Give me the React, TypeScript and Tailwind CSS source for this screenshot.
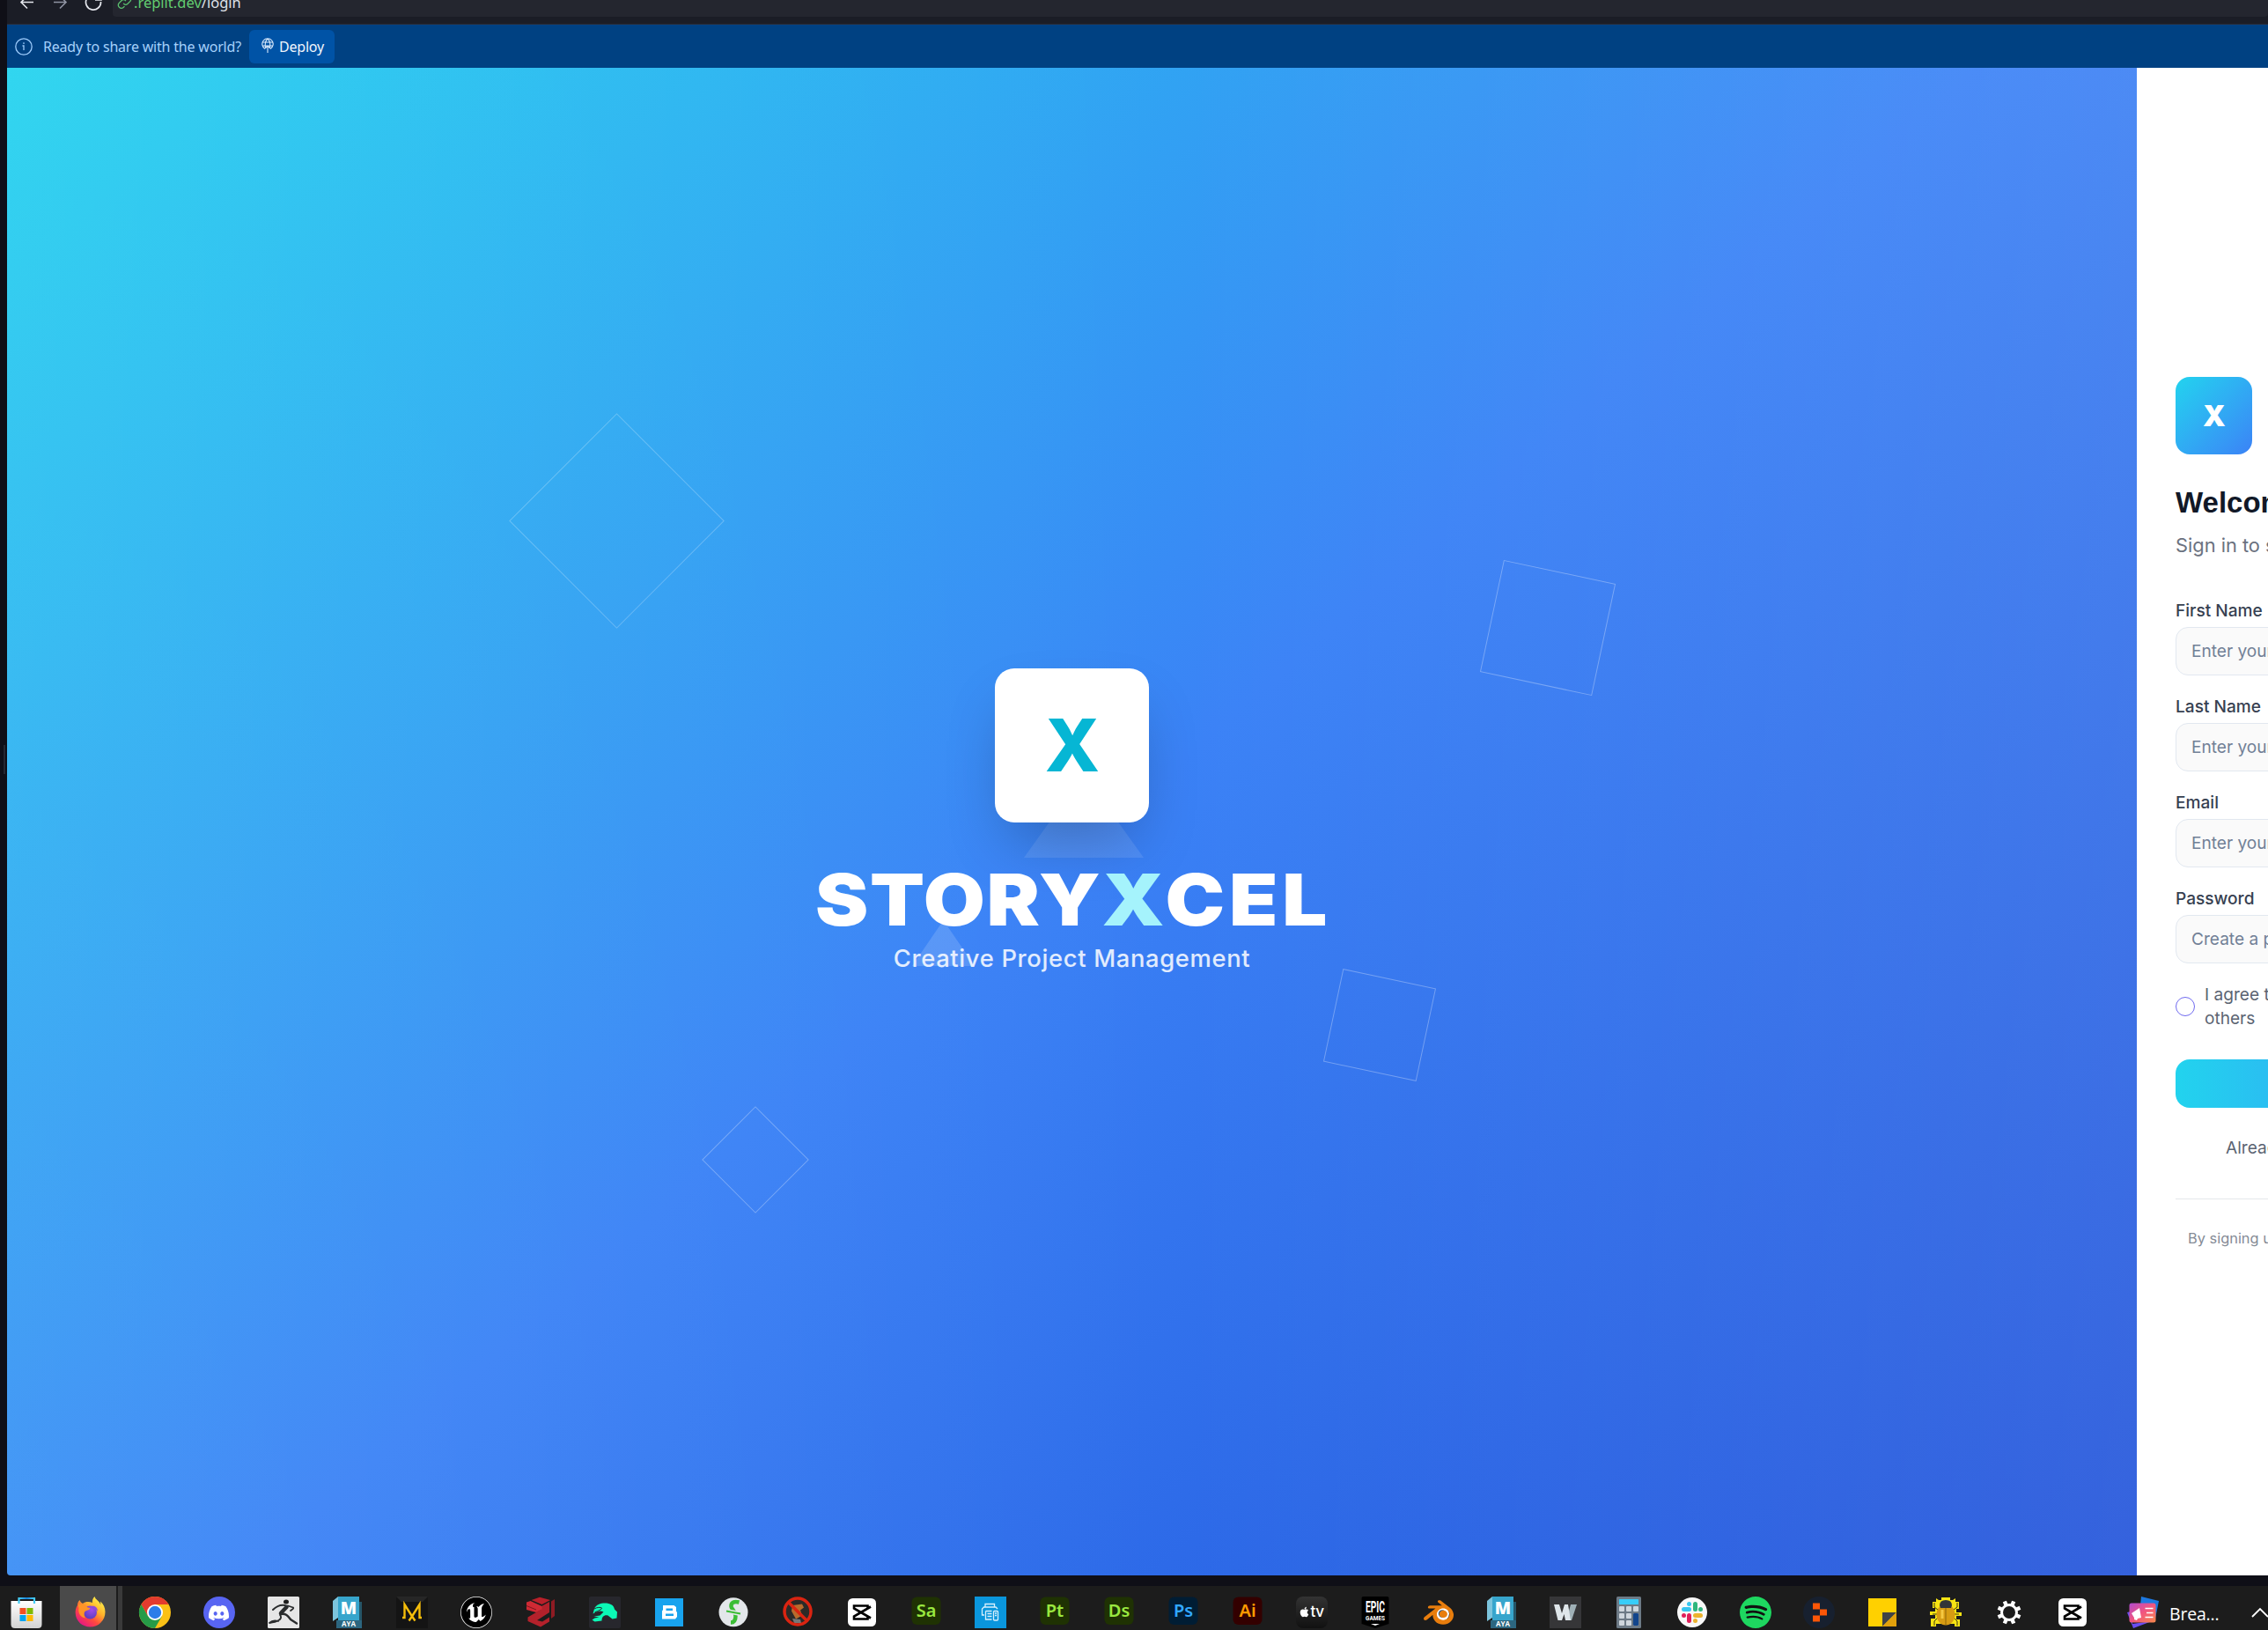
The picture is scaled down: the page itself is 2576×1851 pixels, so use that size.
import React from "react";
import { SiUnrealengine, SiDiscord, SiSpotify, SiBlender } from "react-icons/si";
import { FaApple } from "react-icons/fa";

const inter = "font-['Inter',sans-serif]";
const plex = "font-['Noto_Sans',sans-serif]";

function Svg({ children, size = 36 }: { children: React.ReactNode; size?: number }) {
  return (
    <svg width={size} height={size} viewBox="0 0 36 36" className="block shrink-0 overflow-visible">
      {children}
    </svg>
  );
}

function Store() {
  return (
    <Svg>
      <defs>
        <linearGradient id="st" x1="0" y1="0" x2="0" y2="1"><stop offset="0" stopColor="#fff" /><stop offset="1" stopColor="#d2d2d2" /></linearGradient>
        <linearGradient id="sth" x1="0" y1="0" x2="1" y2="0"><stop offset="0" stopColor="#45cdf5" /><stop offset="0.5" stopColor="#1a83d8" /><stop offset="1" stopColor="#45cdf5" /></linearGradient>
      </defs>
      <path d="M.5 5h35v26.500q0 4.500-4.500 4.500h-26q-4.500 0-4.500-4.500z" fill="url(#st)" />
      <path d="M9.500 8V2h17.500v6" fill="none" stroke="url(#sth)" strokeWidth="2.200" />
      <path d="M10.500 13h7v7h-7z" fill="#f25022" /><path d="M18.500 13h7v7h-7z" fill="#7fba00" />
      <path d="M10.500 21h7v7h-7z" fill="#00a4ef" /><path d="M18.500 21h7v7h-7z" fill="#ffb900" />
    </Svg>
  );
}

function Firefox() {
  return (
    <Svg>
      <defs>
        <linearGradient id="ff" x1="0.85" y1="0.1" x2="0.2" y2="0.95"><stop offset="0" stopColor="#fff04a" /><stop offset="0.35" stopColor="#ffb02a" /><stop offset="0.65" stopColor="#ff4a3d" /><stop offset="1" stopColor="#e31587" /></linearGradient>
        <radialGradient id="ffp" cx="0.6" cy="0.3" r="0.7"><stop offset="0" stopColor="#a44bea" /><stop offset="1" stopColor="#5a40bd" /></radialGradient>
      </defs>
      <path d="M22.500 0c-2 2-3 4.500-2.500 7-4-1.500-8-1.500-11 1C7.500 7 6 6 5.500 4 3.500 6 3 8 3 10c-2 3-2.500 6-2.300 9C1.200 28 8.500 34.500 17.500 34.500c9.500 0 17-7.500 17-17 0-5-2-9-5.500-12l.4 4C27.500 4 23.500 4 22.500 0z" fill="url(#ff)" />
      <circle cx="17.500" cy="18" r="7.500" fill="url(#ffp)" />
      <path d="M3.500 9.500c4-2 8-1 9.500 2 1 1 3 1 4.500 1.500-1 3-4.500 2.500-6 4-1.500 2-1 6 1 7.500C6 24 3.500 18 4.500 13z" fill="#ff9427" />
      <path d="M19 11c4-1 7 2 7 6-1-2-3-2.500-5-2.500z" fill="#8e4adb" />
    </Svg>
  );
}

function Chrome() {
  return (
    <Svg>
      <circle cx="18" cy="18" r="18" fill="#fbc116" />
      <path d="M18 9h15.600A18 18 0 0 0 2.410 9L10.200 22.500z" fill="#e33b2e" />
      <path d="M2.410 9A18 18 0 0 0 18 36l7.800-13.500H10.200z" fill="#269b47" />
      <circle cx="18" cy="18" r="9" fill="#fff" /><circle cx="18" cy="18" r="7.200" fill="#2b7de9" />
    </Svg>
  );
}

function Discord() {
  return (
    <div className="flex size-9 items-center justify-center rounded-full bg-[#5865f2]">
      <SiDiscord size={23} color="#fff" />
    </div>
  );
}

function ZBrush() {
  return (
    <Svg>
      <rect width="36" height="36" rx="1.500" fill="#e6e6e6" />
      <ellipse cx="21" cy="6" rx="3" ry="2.500" fill="#1d1d1d" />
      <g fill="none" stroke="#2a2c2d" strokeLinecap="round" strokeLinejoin="round">
        <path d="M21.500 12c-2 2-4 4-6.500 7" strokeWidth="4.500" /><path d="M23 10.500l6 2c1 1-1 2-3 3.500" strokeWidth="1.800" />
        <path d="M20 10c-5-1-9 0-14 5" strokeWidth="2" /><path d="M15 20c6-1 8 2 11 6l7 4.500" strokeWidth="2.400" />
        <path d="M14 21c4 5-4 8-12 9 3-3 7-3 10-2" strokeWidth="1.800" />
      </g>
    </Svg>
  );
}

function Maya() {
  return (
    <Svg>
      <path d="M30 6h4v30H30z" fill="#255668" />
      <path d="M1 5 7 0v24l-6 4z" fill="#7cc4dc" />
      <path d="M7 0h24v27H7z" fill="#37a5cc" />
      <path d="M5 27h29v9H5z" fill="#2c6680" />
      <text x="19" y="20" textAnchor="middle" className="font-['Open_Sans',sans-serif] text-[19px] font-extrabold" fill="#fff">M</text>
      <text x="19" y="33.500" textAnchor="middle" className="font-['Open_Sans',sans-serif] text-[8px] font-bold" fill="#fff">AYA</text>
    </Svg>
  );
}

function Marvelous() {
  return (
    <Svg>
      <path d="M0 0h36v36H0z" fill="#141414" /><path d="M0 0h36l-6 6H6z" fill="#262626" />
      <path d="M7 24h2.500V9L18 22.500l3.500 5M29 24h-2.500V9L18 22.500l-3.500 5" fill="none" stroke="#f5bd0a" strokeWidth="2.400" />
    </Svg>
  );
}

function Unreal() {
  return (
    <div className="flex size-9 items-center justify-center rounded-full bg-black">
      <SiUnrealengine size={36} color="#fff" />
    </div>
  );
}

function Zee() {
  return (
    <Svg>
      <path d="M7.500 4 17 .8 29 4l-9.500 5z" fill="#b9202a" />
      <path d="M19 11 28 6v12L14 27l6 1.500 8-5v5L18 34.500 3.500 28v-4.500L19 14.500z" fill="#b3212b" />
      <path d="M2 6.500 6.500 5l13 6v3.500L13 18 2 15z" fill="#cf2a34" />
      <path d="M2 10.500 13 15" stroke="#7d161e" strokeWidth="1" />
      <path d="M30 5.500 34 3v19l-4 3z" fill="#8e1b23" />
    </Svg>
  );
}

function Character() {
  return (
    <Svg>
      <rect width="36" height="36" rx="2" fill="#27272d" />
      <path d="M6 14C8 9 13 7.500 18 7.500c6 0 10 2 11 7l3 3-.5 7-5 1-5-4c-4-1-7 1-7 6l-8 1-3-2 3-2 5-1-6-1 7-1 4-4c-3-2-7-1-12 2z" fill="#0bf9b6" />
      <path d="M6 14c3-2 7-2 8.500-1 0 2-4 3-8 5" fill="none" stroke="#27272d" />
    </Svg>
  );
}

function Bridge() {
  return (
    <Svg>
      <path d="M2 2h32v32H2z" fill="#18a3ee" />
      <path fillRule="evenodd" d="M11 10h12.500l2.500 2v4.500l1 1.500v5l-2 2.500H10v-9.500l1-.5zM14.500 13.500v2.500h7.500v-2.500zM14 19.500V22h9v-2.500z" fill="#fff" />
    </Svg>
  );
}

function Fab() {
  return (
    <Svg>
      <circle cx="18" cy="17.800" r="16.500" fill="#e3e7ea" />
      <path d="M24.500 6.500c-6-1.500-9.500.5-9 5 .3 3 5 5 5 10.500s-2 7.500-5.500 7.500" fill="none" stroke="#3bbd35" strokeWidth="4.500" />
      <path d="M10 16.500 26 19.500" stroke="#e3e7ea" strokeWidth="5" /><path d="M10 16.500 26 19.500" stroke="#3bbd35" strokeWidth="1.800" />
    </Svg>
  );
}

function Blocked() {
  return (
    <Svg>
      <circle cx="18" cy="17" r="15" fill="#2c2a27" />
      <path d="M12 10l11-1.500 2 4-4 3 2 6-7 4-5-9z" fill="#b96b2c" /><path d="M12 25l9 1 1 4h-8z" fill="#777" />
      <circle cx="18" cy="17" r="15" fill="none" stroke="#da2411" strokeWidth="3.500" /><path d="M7.500 6.500l21 21" stroke="#da2411" strokeWidth="3.500" />
    </Svg>
  );
}

function CapCut() {
  return (
    <Svg>
      <rect x="2" y="2" width="32" height="32" rx="5.500" fill="#fff" />
      <path d="M28 11.500 9 22.500v3h15.500v-3M28 24.500 9 13.500v-3h15.500v3" fill="none" stroke="#000" strokeWidth="2.600" />
    </Svg>
  );
}

function Adobe({ label, bg, fg }: { label: string; bg: string; fg: string }) {
  return (
    <Svg>
      <rect x="1.500" y="0.500" width="33" height="31.500" rx="6" fill={bg} />
      <text x="18" y="23" textAnchor="middle" className="font-['Noto_Sans',sans-serif] text-[20px] font-semibold" fill={fg}>{label}</text>
    </Svg>
  );
}

function Printer() {
  return (
    <Svg>
      <path d="M0 0h36v36H0z" fill="#0a96dc" />
      <g fill="none" stroke="#d8f0fc" strokeWidth="1.300">
        <path d="M12 12V8.500h10.500V12M11 21H8.500v-7l2-2h13.500l2 2M12.500 16.500v9.500h7M12.500 16.500h7M14.500 19.500h5M14.500 22.500h5" />
        <rect x="21.500" y="16.500" width="5" height="10.500" rx="1" /><path d="M23 19h2M23 21.500h2" />
      </g>
    </Svg>
  );
}

function AppleTv() {
  return (
    <div className="flex size-9 items-center justify-center rounded-lg bg-linear-to-b from-[#333] to-[#111] pb-0.5 text-white">
      <FaApple size={13} />
      <span className="font-['Inter',sans-serif] text-[17px] leading-none font-medium tracking-tight">tv</span>
    </div>
  );
}

function Epic() {
  return (
    <Svg>
      <path d="M2.500 2q0-2 2-2h27q2 0 2 2v29L18 36 2.500 31z" fill="#000" />
      <text x="7" y="18" textLength="22" lengthAdjust="spacingAndGlyphs" className="font-['Roboto',sans-serif] text-[19px] font-bold" fill="#fff">EPIC</text>
      <text x="7" y="26.500" textLength="22" lengthAdjust="spacingAndGlyphs" className="font-['Roboto',sans-serif] text-[6.500px] font-bold" fill="#fff">GAMES</text>
      <path d="M13 31h10l-5 2z" fill="#fff" />
    </Svg>
  );
}

function Blender() {
  return (
    <div className="relative flex size-9 items-center justify-center">
      <svg viewBox="0 0 36 36" className="absolute inset-0"><circle cx="22" cy="19.500" r="8" fill="#fff" /><circle cx="22" cy="19.500" r="4.200" fill="#265787" /></svg>
      <SiBlender size={34} color="#e87d0d" className="relative" />
    </div>
  );
}

function Word() {
  return (
    <Svg>
      <path d="M0 0h36v36H0z" fill="#363638" />
      <path d="M24 9h7l-6 18h-6z" fill="#9fb0b6" /><path d="M5 9h6l3 10 3-10h4l3 18h-6l-1.500-7L14 27H9.500z" fill="#dfe6ea" />
    </Svg>
  );
}

function Calculator() {
  return (
    <Svg>
      <rect x="4" y="0" width="28" height="36" rx="1.500" fill="#6d7a86" />
      <rect x="7" y="3" width="22" height="6" rx="0.500" fill="#38cdf8" />
      {[11, 19, 27].map((y) => [7, 15, 23].map((x) => <rect key={`${x}-${y}`} x={x} y={y} width="6" height="6" rx="1" fill="#cfd6dd" />))}
      <rect x="23" y="19" width="6" height="14" rx="1" fill="#12458c" />
    </Svg>
  );
}

function Slack() {
  return (
    <Svg>
      <circle cx="18" cy="18" r="17" fill="#f8f8f8" />
      <g strokeWidth="5" strokeLinecap="round">
        <path d="M8.500 14.500h6" stroke="#36c5f0" /><path d="M21.500 8.500v6" stroke="#2eb67d" />
        <path d="M21.500 21.500h6" stroke="#ecb22e" /><path d="M14.500 21.500v6" stroke="#e01e5a" />
      </g>
      <circle cx="14.500" cy="8.500" r="2.500" fill="#36c5f0" /><circle cx="27.500" cy="14.500" r="2.500" fill="#2eb67d" />
      <circle cx="21.500" cy="27.500" r="2.500" fill="#ecb22e" /><circle cx="8.500" cy="21.500" r="2.500" fill="#e01e5a" />
    </Svg>
  );
}

function Spotify() {
  return (
    <div className="flex size-9 items-center justify-center rounded-full bg-[#111]">
      <SiSpotify size={36} color="#1ed760" />
    </div>
  );
}

function Replit() {
  return (
    <Svg>
      <circle cx="18" cy="18" r="18" fill="#17202f" />
      <path d="M11 7.500h8v7h-8zM19 14.500h8v7h-8zM11 21.500h8v7h-8z" fill="#fb5607" />
    </Svg>
  );
}

function Sticky() {
  return (
    <Svg>
      <path d="M2 2h32v32H2z" fill="#ffd000" /><path d="M18 18h16L18 34z" fill="#404246" /><path d="M34 18v16H18z" fill="#e2a10c" />
    </Svg>
  );
}

function Bug() {
  return (
    <Svg>
      <path d="M13 1h10v3h3l3-2v4h4v8h-3v4h6v4h-6v4h4v8h-6v-3H7v3H1v-9h5v-4H0v-4h6v-4H3V6h4V2l3 2h3z" fill="#f7e413" />
      <path d="M5 7v5l4 3M31 7v5l-4 3M3 20h6M33 20h-6M5 33v-5l4-4M31 33v-5l-4-4" fill="none" stroke="#3c3812" />
      <ellipse cx="18" cy="20.500" rx="10.500" ry="12" fill="#d79c13" /><path d="M11 10q0-6 7-6t7 6l-1 3H12z" fill="#333438" />
      <path d="M18 13v19" stroke="#8f670a" /><path d="M14 15v10" stroke="#f5c842" strokeWidth="3" />
    </Svg>
  );
}

function Gear() {
  return (
    <Svg>
      <circle cx="18" cy="18" r="8.500" fill="none" stroke="#fff" strokeWidth="3" />
      {[22.5, 67.5, 112.5, 157.5, 202.5, 247.5, 292.5, 337.5].map((a) => (
        <path key={a} d="M15.800 4.500h4.400v5h-4.400z" fill="#fff" transform={`rotate(${a} 18 18)`} />
      ))}
    </Svg>
  );
}

function News() {
  return (
    <Svg>
      <defs><linearGradient id="nw" x1="0" y1="0" x2="1" y2="1"><stop offset="0" stopColor="#b04ad0" /><stop offset="0.5" stopColor="#f2557f" /><stop offset="1" stopColor="#f6894a" /></linearGradient></defs>
      <path d="M16 0l20 5-4 20-18-5z" fill="#1d78e0" /><path d="M0 18l4-1 2 14 22-3-21 8z" fill="#6a4df0" />
      <rect x="2.500" y="7.500" width="30" height="22" rx="2.500" fill="url(#nw)" />
      <path d="M5 19l9-6 2 11-4 1-1 2-3-1v-2z" fill="#fff" /><path d="M20.500 13.500h9M22 18.500h7.500M20.500 23.500h9" stroke="#fff" strokeWidth="1.600" />
    </Svg>
  );
}

const firstApps: React.ReactNode[] = [
  <Chrome />, <Discord />, <ZBrush />, <Maya />, <Marvelous />, <Unreal />, <Zee />, <Character />, <Bridge />, <Fab />, <Blocked />, <CapCut />,
  <Adobe label="Sa" bg="#1f3203" fg="#99e83f" />, <Printer />, <Adobe label="Pt" bg="#1f3203" fg="#99e83f" />, <Adobe label="Ds" bg="#1f3203" fg="#99e83f" />,
  <Adobe label="Ps" bg="#001d34" fg="#31a8ff" />, <Adobe label="Ai" bg="#330000" fg="#ff9a00" />, <AppleTv />,
];
const lastApps: React.ReactNode[] = [
  <Epic />, <Blender />, <Maya />, <Word />, <Calculator />, <Slack />, <Spotify />, <Replit />, <Sticky />, <Bug />, <Gear />, <CapCut />,
];

function Taskbar() {
  return (
    <footer className="flex h-[50px] w-full shrink-0 overflow-hidden bg-[#1c1c1c]">
      <div className="flex w-[68px] shrink-0 pt-3 pl-3"><Store /></div>
      <div className="flex w-16 shrink-0 bg-[#4a4a4a] pt-3 pl-[17px]"><Firefox /></div>
      <div className="ml-0.5 w-[5px] shrink-0 bg-[#3a3a3a]" />
      <div className="flex shrink-0">
        {firstApps.map((icon, i) => (
          <div key={i} className="flex w-[73px] shrink-0 justify-center pt-3">{icon}</div>
        ))}
        {lastApps.map((icon, i) => (
          <div key={i} className="flex w-[72px] shrink-0 justify-center pt-3">{icon}</div>
        ))}
      </div>
      <div className="flex shrink-0 items-start pt-3 pl-[26px]">
        <News />
        <span className="ml-3 w-[93px] pt-1.5 font-['Open_Sans',sans-serif] text-[19.500px] leading-7 tracking-[-0.2px] text-white">Brea...</span>
        <svg width="20" height="12" viewBox="0 0 20 12" className="mt-3 shrink-0"><path d="M1 11 10 2l9 9" fill="none" stroke="#fff" strokeWidth="1.800" /></svg>
      </div>
    </footer>
  );
}

function AddressBar() {
  return (
    <div className="flex h-[27px] items-start overflow-hidden bg-[#1b1d26]">
      <svg width="18" height="20" viewBox="0 0 18 20" className="-mt-2 ml-[14px]" fill="none" stroke="#e4e6ec" strokeWidth="1.600"><path d="M16 10.500H2M9 3.500l-7 7 7 7" /></svg>
      <svg width="18" height="20" viewBox="0 0 18 20" className="-mt-2 ml-[19px]" fill="none" stroke="#8f93a2" strokeWidth="1.600"><path d="M2 10.500h14M9 3.500l7 7-7 7" /></svg>
      <svg width="24" height="24" viewBox="0 0 24 24" className="-mt-3 ml-[17px]" fill="none" stroke="#e4e6ec" strokeWidth="1.700"><path d="M18 8.500A8.500 8.500 0 1 0 20.500 14M21 5v7h-7" /></svg>
      <div className="ml-2.5 flex h-[19px] flex-1 items-start rounded-b bg-[#24262f]">
        <svg width="17" height="17" viewBox="0 0 24 24" className="-mt-1.5 ml-[5px] shrink-0" fill="none" stroke="#5cc470" strokeWidth="1.800"><path d="M10 14a5 5 0 0 0 7 .5l4-4a5 5 0 0 0-7-7l-2 2M14 10a5 5 0 0 0-7-.5l-4 4a5 5 0 0 0 7 7l2-2" /></svg>
        <p className={`${plex} -mt-2.5 ml-0.5 text-[16.500px] leading-[25px] whitespace-nowrap text-[#dfe1e8]`}><span className="text-[#62cc70]">.replit.dev</span>/login</p>
      </div>
    </div>
  );
}

function DeployBanner() {
  return (
    <div className={`${plex} flex h-[50px] items-center border-t border-[#2b2d38] bg-[#004182]`}>
      <svg width="20" height="20" viewBox="0 0 20 20" className="ml-[9px]" fill="none" stroke="#9dcbfb" strokeWidth="1.300"><circle cx="10" cy="10" r="9.200" /><path d="M8.500 9H10v5M10 5.300v1.700" /></svg>
      <span className="ml-3 w-[226px] text-[16px] leading-6 tracking-[-0.2px] whitespace-nowrap text-[#a5d0fb]">Ready to share with the world?</span>
      <div className="ml-2 flex h-[38px] w-[97px] items-center rounded-md bg-[#0053a6] pl-3.5">
        <svg width="14" height="18" viewBox="0 0 14 18" className="mb-0.5" fill="none" stroke="#d9e9fb" strokeWidth="1.100"><path d="M4 12.400A6.200 6.200 0 1 1 10 12.400M1 5h12M1 9h12M4.800 12C3.500 8 4.500 3 7 1c2.500 2 3.500 7 2.200 11M7 17V9M4.500 11.500 7 9l2.500 2.500" /></svg>
        <span className="ml-1.5 text-[16px] leading-6 tracking-[-0.2px] text-[#f0f5fc]">Deploy</span>
      </div>
    </div>
  );
}

function Hero() {
  return (
    <section className="relative flex w-[2419px] shrink-0 flex-col items-center overflow-hidden rounded-bl bg-[linear-gradient(139deg,#22d3ee,#3b82f6_51%,#1e50d9)] pt-[682px]">
      <div className="absolute inset-0 bg-linear-to-r from-white/7 via-transparent via-55% to-white/10" />
      <div className="absolute top-[428px] left-[606px] size-[173px] rotate-45 border border-white/25" />
      <div className="absolute top-[571px] left-[1685px] size-[130px] rotate-12 border border-white/30" />
      <div className="absolute top-[1033px] left-[1505px] size-[108px] rotate-12 border border-white/30" />
      <div className="absolute top-[1197px] left-[807px] size-[86px] rotate-45 border border-white/30" />
      <div className="absolute top-[802px] left-[1155px] h-[95px] w-[136px] bg-white/10 [clip-path:polygon(50%_0,100%_100%,0_100%)]" />
      <div className="absolute top-[968px] left-[1028px] h-[52px] w-[71px] bg-white/15 [clip-path:polygon(50%_0,100%_100%,0_100%)]" />
      <div className="relative flex size-[175px] items-center justify-center rounded-[22px] bg-white shadow-[0_34px_68px_-16px_rgba(0,0,0,0.25)]">
        <span className={`${inter} ml-px text-[82px] leading-none font-extrabold text-[#06b6d4]`}>X</span>
      </div>
      <h1 className={`${inter} relative mt-[47px] ml-1 scale-x-111 text-[81.500px] leading-[82px] font-black text-white`}>
        <span className="tracking-[0.019em]">STORY</span>
        <span className="tracking-[0.01em] text-[#a5f3fc]">X</span>
        <span className="tracking-[0.053em]">CEL</span>
      </h1>
      <p className={`${inter} relative mt-[7px] text-[27.300px] leading-[38px] font-medium tracking-[0.025em] text-white/85`}>Creative Project Management</p>
    </section>
  );
}

function Field({ label, placeholder }: { label: string; placeholder: string }) {
  return (
    <label className="mb-[22px] block">
      <span className="block text-[19.100px] leading-[26px] font-medium text-[#374151]">{label}</span>
      <span className="mt-1.5 flex h-[55px] items-center rounded-[14px] border border-[#e2e8f0] bg-[#fafafa] pl-[17px] text-[19.100px] whitespace-nowrap text-[#718096]">{placeholder}</span>
    </label>
  );
}

function SignIn() {
  return (
    <section className={`${inter} flex-1 overflow-hidden bg-white pt-[351px] pl-11`}>
      <div className="w-[404px]">
        <div className="flex h-[88px] w-[87px] items-center justify-center rounded-2xl bg-linear-to-br from-[#22d3ee] to-[#3b82f6]">
          <span className="ml-px text-[32.800px] leading-none font-black text-white">X</span>
        </div>
        <h2 className="mt-[33px] font-['Liberation_Sans',sans-serif] text-[33px] leading-[44px] font-bold text-[#111827]">Welcome</h2>
        <p className="mt-2.5 mb-[45px] text-[21.800px] leading-8 text-[#6b7280]">Sign in to start</p>
        <Field label="First Name" placeholder="Enter your first name" />
        <Field label="Last Name" placeholder="Enter your last name" />
        <Field label="Email" placeholder="Enter your email" />
        <Field label="Password" placeholder="Create a password" />
        <div className="flex items-center gap-[11px]">
          <span className="size-[22px] shrink-0 rounded-full border border-[#6f6af0]" />
          <p className="text-[19.100px] leading-[27px] whitespace-nowrap text-[#5b6472]">I agree to share with<br />others</p>
        </div>
        <div className="mt-[33px] h-[55px] rounded-2xl bg-linear-to-r from-[#22d3ee] to-[#3b82f6]" />
        <p className="mt-8 ml-[57px] text-[19.100px] leading-[27px] whitespace-nowrap text-[#5b6472]">Already have an account?</p>
        <div className="mt-11 h-px bg-[#e5e7eb]" />
        <p className="mt-[33px] ml-3.5 text-[16.400px] leading-[22px] whitespace-nowrap text-[#858b96]">By signing up, you agree</p>
      </div>
    </section>
  );
}

export default function App() {
  return (
    <div className="relative flex h-[1851px] w-[2576px] flex-col overflow-hidden bg-[#0f0f17]">
      <div className="absolute top-[846px] left-1 h-[33px] w-0.5 bg-[#252731]" />
      <main className="flex h-[1789px] shrink-0 flex-col pl-2">
        <AddressBar />
        <DeployBanner />
        <div className="flex flex-1 overflow-hidden">
          <Hero />
          <SignIn />
        </div>
      </main>
      <div className="h-3 shrink-0" />
      <Taskbar />
    </div>
  );
}
